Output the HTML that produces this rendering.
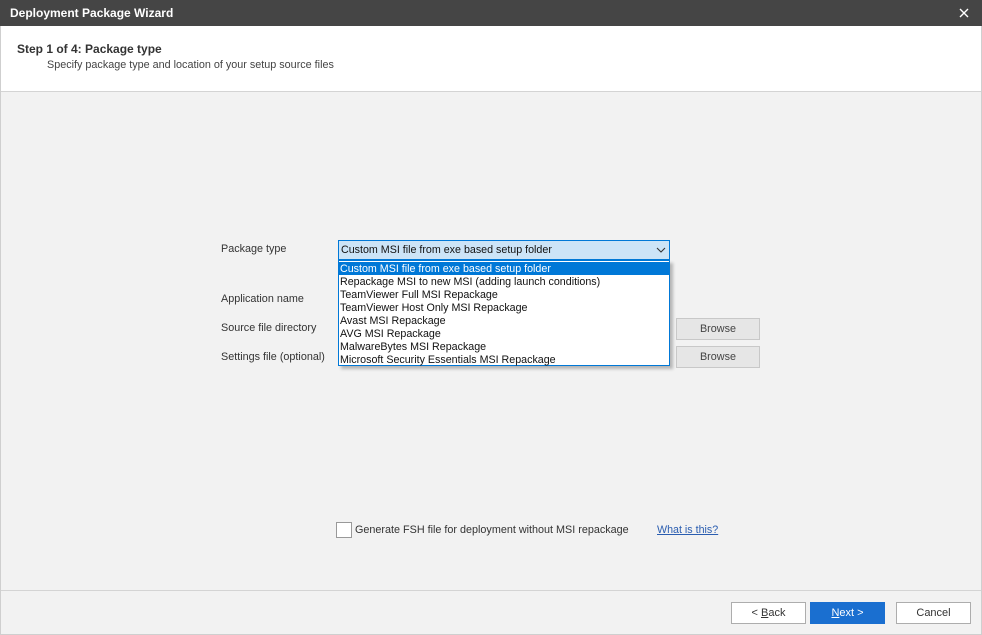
<!DOCTYPE html>
<html><head><meta charset="utf-8"><style>
*{margin:0;padding:0;box-sizing:border-box}
body{width:982px;height:635px;background:#f2f2f2;font-family:"Liberation Sans",Tahoma,sans-serif;font-size:11px;color:#333;position:relative;overflow:hidden}
.abs{position:absolute}
.win{left:0;top:0;width:982px;height:635px;border:1px solid #cfcfcf;border-top:none}
.title{left:0;top:0;width:982px;height:26px;background:#454545;color:#fff;font-weight:bold;font-size:12px;line-height:26px;padding-left:10px}
.hdr{left:1px;top:26px;width:980px;height:66px;background:#fff;border-bottom:1px solid #d4d4d4}
.lbl{font-size:10.8px;color:#333;white-space:nowrap}
.btn{background:#fff;border:1px solid #adadad;text-align:center;line-height:21px;font-size:11px;color:#333}
.gbtn{background:#e6e6e6;border:1px solid #c8c8c8;text-align:center;line-height:21px;font-size:10.8px;color:#444}
.list div{height:13px;line-height:14px;padding-left:1px;font-size:10.7px;color:#111;white-space:nowrap}
</style></head><body>
<div class="abs win"></div>
<div class="abs title">Deployment Package Wizard</div>
<svg class="abs" style="left:959px;top:8px" width="10" height="10"><path d="M1 1L9 9M9 1L1 9" stroke="#fff" stroke-width="1.4"/></svg>
<div class="abs hdr"></div>
<div class="abs" style="left:17px;top:42px;font-weight:bold;font-size:12px;color:#333">Step 1 of 4: Package type</div>
<div class="abs" style="left:47px;top:59px;font-size:10.8px;color:#444">Specify package type and location of your setup source files</div>

<div class="abs lbl" style="left:221px;top:243px">Package type</div>
<div class="abs lbl" style="left:221px;top:293px">Application name</div>
<div class="abs lbl" style="left:221px;top:322px">Source file directory</div>
<div class="abs lbl" style="left:221px;top:351px">Settings file (optional)</div>

<div class="abs" style="left:338px;top:240px;width:332px;height:20px;background:#cce4f7;border:1px solid #0078d7;font-size:10.7px;line-height:19px;padding-left:2px;color:#111">Custom MSI file from exe based setup folder</div>
<svg class="abs" style="left:656px;top:247px" width="10" height="6"><path d="M1 1L5 5L9 1" stroke="#333" fill="none" stroke-width="1.1"/></svg>

<div class="abs gbtn" style="left:676px;top:318px;width:84px;height:22px">Browse</div>
<div class="abs gbtn" style="left:676px;top:346px;width:84px;height:22px">Browse</div>

<div class="abs list" style="left:338px;top:260px;width:332px;height:106px;background:#fff;border:1px solid #0078d7;box-shadow:3px 3px 3px rgba(0,0,0,0.25);padding-top:1px">
<div style="background:#0078d7;color:#fff">Custom MSI file from exe based setup folder</div>
<div>Repackage MSI to new MSI (adding launch conditions)</div>
<div>TeamViewer Full MSI Repackage</div>
<div>TeamViewer Host Only MSI Repackage</div>
<div>Avast MSI Repackage</div>
<div>AVG MSI Repackage</div>
<div>MalwareBytes MSI Repackage</div>
<div>Microsoft Security Essentials MSI Repackage</div>
</div>

<div class="abs" style="left:336px;top:522px;width:16px;height:16px;background:#fff;border:1px solid #999"></div>
<div class="abs lbl" style="left:355px;top:524px">Generate FSH file for deployment without MSI repackage</div>
<div class="abs lbl" style="left:657px;top:524px;color:#2a5db0;text-decoration:underline;font-size:10.7px">What is this?</div>

<div class="abs" style="left:1px;top:590px;width:980px;height:1px;background:#d4d4d4"></div>
<div class="abs btn" style="left:731px;top:602px;width:75px;height:22px">&lt; <u>B</u>ack</div>
<div class="abs btn" style="left:810px;top:602px;width:75px;height:22px;background:#1a6fd0;border-color:#1a6fd0;color:#fff"><u>N</u>ext &gt;</div>
<div class="abs btn" style="left:896px;top:602px;width:75px;height:22px">Cancel</div>
</body></html>
